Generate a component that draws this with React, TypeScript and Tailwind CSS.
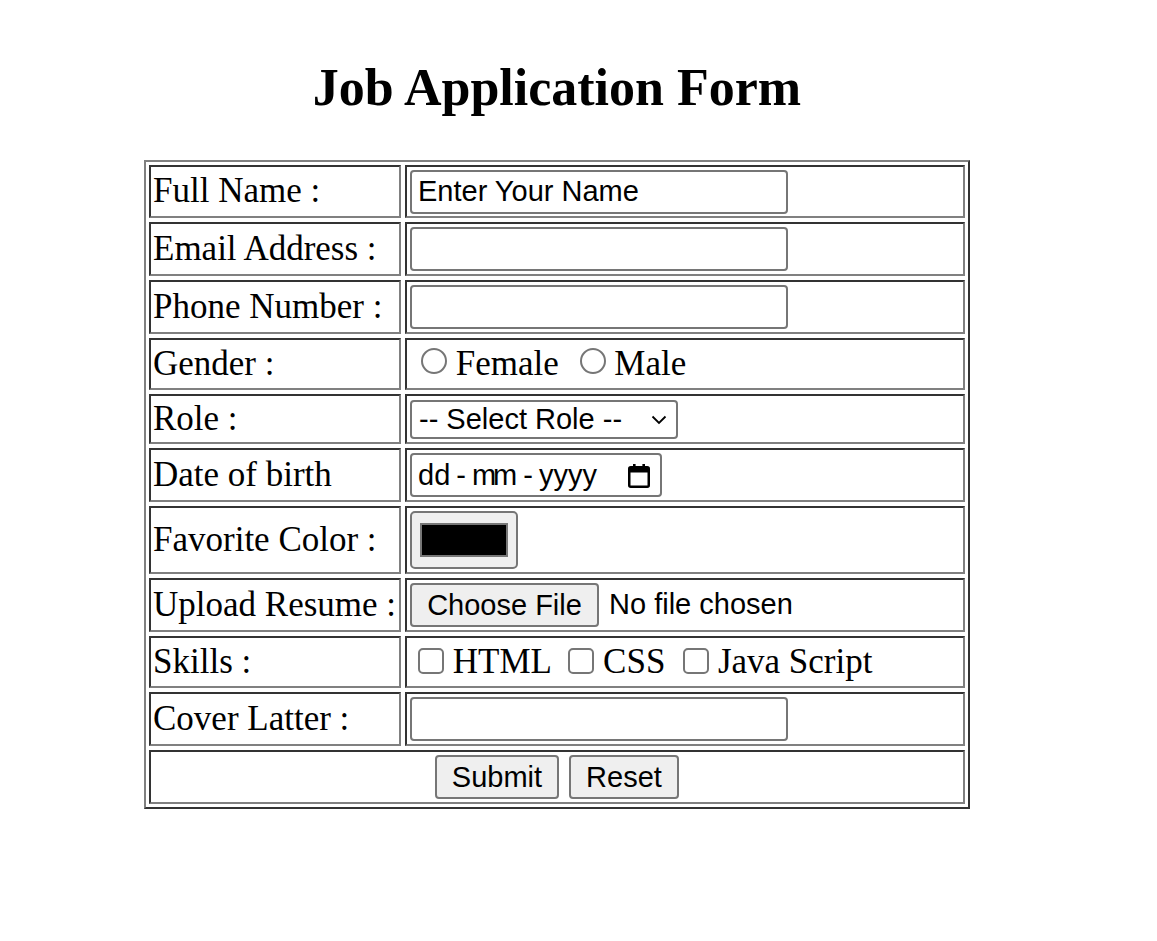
import React from 'react';

// table-like cell with the old inset border look
const cell =
  'flex items-center px-[2px] border-2 border-t-[#333333] border-l-[#333333] border-r-[#808080] border-b-[#808080]';
const sans = "font-['Liberation_Sans',Arial,sans-serif]";
const textBox = `w-[378px] h-[44px] ml-[1px] px-[6px] border-2 border-[#767676] rounded-[4px] bg-white text-black text-[29px] leading-none outline-none ${sans}`;
const greyButton = `h-[44px] bg-[#efefef] border-2 border-[#767676] rounded-[4px] text-black text-[29px] leading-none ${sans}`;

const Radio = () => (
  <span className="inline-block align-baseline w-[26px] h-[26px] ml-[12px] mb-[1px] rounded-full border-2 border-[#767676] bg-white" />
);

const Checkbox = () => (
  <span className="inline-block align-baseline w-[26px] h-[26px] ml-[9px] -mb-[1px] rounded-[5px] border-2 border-[#767676] bg-white" />
);

const CalendarIcon = () => (
  <svg width="24" height="25" viewBox="0 0 24 25" fill="none">
    <rect x="2.25" y="4.25" width="19.5" height="19.5" rx="1.5" stroke="black" strokeWidth="2.5" />
    <rect x="2" y="4" width="20" height="5.5" fill="black" />
    <rect x="6" y="1" width="2.6" height="5" fill="black" />
    <rect x="15.4" y="1" width="2.6" height="5" fill="black" />
  </svg>
);

const App = () => {
  const rows = [
    {
      label: 'Full Name :',
      h: 'h-[53px]',
      field: <input type="text" defaultValue="Enter Your Name" className={textBox} />,
    },
    { label: 'Email Address :', h: 'h-[54px]', field: <input type="text" className={textBox} /> },
    { label: 'Phone Number :', h: 'h-[54px]', field: <input type="text" className={textBox} /> },
    {
      label: 'Gender :',
      h: 'h-[52px]',
      field: (
        <div className="leading-normal">
          <Radio /> Female <Radio /> Male
        </div>
      ),
    },
    {
      label: 'Role :',
      h: 'h-[50px]',
      field: (
        <div className="relative ml-[1px] w-[268px] h-[39px]">
          <select
            className={`appearance-none block w-full h-[39px] py-0 pl-[7px] border-2 border-[#767676] rounded-[4px] bg-white text-black text-[29px] leading-none outline-none ${sans}`}
          >
            <option>-- Select Role --</option>
            <option>Developer</option>
            <option>Designer</option>
            <option>Tester</option>
          </select>
          <svg
            className="absolute right-[11px] top-[15px] pointer-events-none"
            width="16"
            height="10"
            viewBox="0 0 16 10"
            fill="none"
          >
            <path d="M1.5 1.5 L8 8 L14.5 1.5" stroke="black" strokeWidth="1.8" />
          </svg>
        </div>
      ),
    },
    {
      label: 'Date of birth',
      h: 'h-[54px]',
      field: (
        <div
          className={`ml-[1px] w-[252px] h-[44px] pl-[6px] pr-[9px] flex items-center justify-between border-2 border-[#767676] rounded-[4px] bg-white text-[29px] leading-none ${sans}`}
        >
          <span>
            dd<span className="mx-[6px]">-</span>
            <span className="tracking-[-3px]">m</span>m
            <span className="mx-[6px]">-</span>yyyy
          </span>
          <CalendarIcon />
        </div>
      ),
    },
    {
      label: 'Favorite Color :',
      h: 'h-[68px]',
      field: (
        <div className="ml-[1px] w-[108px] h-[58px] flex items-center justify-center bg-[#efefef] border-2 border-[#767676] rounded-[5px]">
          <div className="w-[88px] h-[34px] bg-black border-2 border-[#777777]" />
        </div>
      ),
    },
    {
      label: 'Upload Resume :',
      h: 'h-[54px]',
      field: (
        <div className="flex items-center">
          <button className={`${greyButton} ml-[1px] w-[189px]`}>Choose File</button>
          <span className={`ml-[10px] text-[29px] ${sans}`}>No file chosen</span>
        </div>
      ),
    },
    {
      label: 'Skills :',
      h: 'h-[52px]',
      field: (
        <div className="leading-normal">
          <Checkbox /> HTML <Checkbox /> CSS <Checkbox /> Java Script
        </div>
      ),
    },
    { label: 'Cover Latter :', h: 'h-[54px]', field: <input type="text" className={textBox} /> },
  ];

  return (
    <div className="min-h-screen bg-white text-black font-['Liberation_Serif','Times_New_Roman',serif]">
      <div className="ml-[144px] w-[826px] pt-[58px]">
        <h1 className="text-center text-[52px] leading-[60px] font-bold">Job Application Form</h1>

        <div className="mt-[42px] w-fit p-[3px] border-2 border-t-[#808080] border-l-[#808080] border-r-[#333333] border-b-[#333333]">
          <div className="grid grid-cols-[252px_560px] gap-[4px] text-[35px]">
            {rows.map((r) => (
              <React.Fragment key={r.label}>
                <div className={`${cell} ${r.h}`}>{r.label}</div>
                <div className={`${cell} ${r.h}`}>{r.field}</div>
              </React.Fragment>
            ))}
            <div className={`${cell} h-[54px] col-span-2 justify-center gap-[10px]`}>
              <button className={`${greyButton} w-[124px]`}>Submit</button>
              <button className={`${greyButton} w-[110px]`}>Reset</button>
            </div>
          </div>
        </div>
      </div>
    </div>
  );
};

export default App;
